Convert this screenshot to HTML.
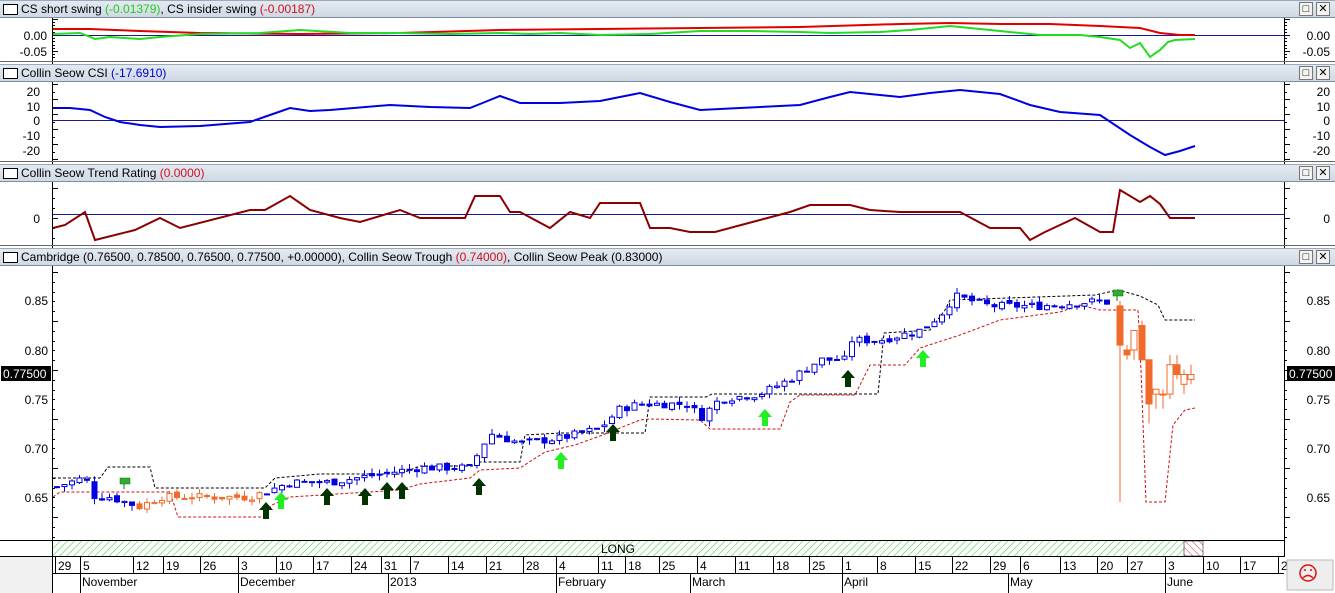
<!DOCTYPE html>
<html><head><meta charset="utf-8">
<style>
body{margin:0;width:1335px;height:593px;overflow:hidden;background:#fff;font-family:"Liberation Sans",sans-serif;position:relative}
.tb{position:absolute;left:0;width:1335px;height:16px;background:linear-gradient(#e4eaf1,#cfd9e4);border-top:1px solid #9aa8b8;border-bottom:1px solid #7f8fa0;font-size:12px;line-height:16px;color:#000}
.tb .ic{position:absolute;left:3px;top:3px;width:13px;height:9px;border:1px solid #000;background:#fff}
.tb .t{position:absolute;left:21px;top:0;white-space:nowrap}
.tb .b{position:absolute;top:1px;width:12px;height:12px;border:1px solid #777;background:#f2f2f2;font-size:11px;line-height:12px;text-align:center}
svg{position:absolute;left:0;top:0}
</style></head><body>
<svg id="s" width="1335" height="593" font-family="Liberation Sans" font-size="12">
<rect x="0" y="557" width="52" height="36" fill="#f0f0f0"/>
<line x1="52.5" y1="18" x2="52.5" y2="593" stroke="#000"/>
<line x1="1284.5" y1="18" x2="1284.5" y2="557" stroke="#000"/>
<g id="tk"></g>
<!-- panel1 -->
<line x1="53" y1="35.5" x2="1284" y2="35.5" stroke="#1a1a8c"/>
<text x="47" y="40" text-anchor="end">0.00</text><text x="47" y="56" text-anchor="end">-0.05</text>
<text x="1330" y="40" text-anchor="end">0.00</text><text x="1330" y="56" text-anchor="end">-0.05</text>
<polyline fill="none" stroke="#e00000" stroke-width="2" points="53,29 90,29 140,31 200,33 300,34 400,33 500,30 600,29 700,28 800,27 900,24 950,23 1000,24 1050,24 1100,26 1140,28 1160,33 1180,35 1195,35"/>
<polyline fill="none" stroke="#22dd22" stroke-width="2" points="53,34 80,33 95,39 110,37 140,39 160,37 200,34 260,33 300,30 350,33 400,33 450,34 500,33 530,34 560,33 600,35 650,34 700,31 750,31 800,32 830,33 880,32 910,30 950,26 990,30 1040,35 1080,35 1100,37 1120,40 1130,48 1140,43 1150,57 1160,50 1168,42 1175,40 1195,39"/>
<line x1="0" y1="61.5" x2="1335" y2="61.5" stroke="#666"/>
<!-- panel2 -->
<line x1="53" y1="120.5" x2="1284" y2="120.5" stroke="#1a1a8c"/>
<g text-anchor="end"><text x="40" y="96">20</text><text x="40" y="111">10</text><text x="40" y="125">0</text><text x="40" y="140">-10</text><text x="40" y="155">-20</text>
<text x="1330" y="96">20</text><text x="1330" y="111">10</text><text x="1330" y="125">0</text><text x="1330" y="140">-10</text><text x="1330" y="155">-20</text></g>
<polyline fill="none" stroke="#0000e0" stroke-width="2" points="53,108 70,108 90,110 105,117 120,122 140,125 160,127 200,126 250,122 270,115 290,108 310,111 330,110 390,105 430,107 470,108 485,102 500,96 520,103 560,103 600,101 620,97 640,93 670,102 700,110 740,108 780,106 800,105 830,97 850,92 900,97 930,93 960,90 1000,94 1030,105 1060,112 1100,115 1115,125 1130,135 1150,147 1165,155 1180,151 1195,146"/>
<line x1="0" y1="161.5" x2="1335" y2="161.5" stroke="#666"/>
<!-- panel3 -->
<line x1="53" y1="214.5" x2="1284" y2="214.5" stroke="#1a1a8c"/>
<text x="40" y="223" text-anchor="end">0</text><text x="1330" y="223" text-anchor="end">0</text>
<polyline fill="none" stroke="#8b0000" stroke-width="2" points="53,228 65,225 85,212 95,240 135,230 160,218 180,228 250,210 265,210 290,196 310,210 340,218 360,222 400,210 420,218 465,218 475,196 500,196 510,212 520,212 550,228 570,212 590,218 600,203 640,203 650,228 670,228 690,232 715,232 790,212 810,205 850,205 870,210 900,212 960,212 990,228 1020,228 1030,240 1045,232 1075,218 1100,232 1113,232 1120,190 1140,202 1150,196 1160,204 1170,218 1195,218"/>
<line x1="0" y1="245.5" x2="1335" y2="245.5" stroke="#666"/>
<!-- panel4 -->
<g text-anchor="end"><text x="48" y="305">0.85</text><text x="48" y="355">0.80</text><text x="48" y="404">0.75</text><text x="48" y="453">0.70</text><text x="48" y="502">0.65</text>
<text x="1330" y="305">0.85</text><text x="1330" y="355">0.80</text><text x="1330" y="404">0.75</text><text x="1330" y="453">0.70</text><text x="1330" y="502">0.65</text></g>
<rect x="1" y="366" width="50" height="15" fill="#000"/><text x="3" y="378" fill="#fff">0.77500</text>
<rect x="1287" y="366" width="48" height="15" fill="#000"/><text x="1289" y="378" fill="#fff">0.77500</text>
<polyline fill="none" stroke="#000" stroke-dasharray="3,2" points="53,478 100,478 108,467 150,467 155,488 265,488 275,478 320,474 400,474 420,466 475,466 480,462 520,462 525,435 560,433 645,433 650,397 706,397 712,394 878,394 884,333 930,330 945,310 950,300 1095,295 1118,290 1140,296 1158,305 1165,320 1195,320"/>
<polyline fill="none" stroke="#d01010" stroke-dasharray="3,2" points="53,497 60,492 170,492 178,517 263,517 272,505 290,497 400,490 420,484 470,478 480,470 520,468 545,452 575,445 600,436 640,420 650,419 700,420 710,429 780,429 790,402 800,395 855,395 870,365 905,365 920,348 960,335 1000,320 1060,312 1080,305 1100,310 1138,310 1141,370 1146,502 1165,502 1173,425 1185,410 1195,408"/>
<g id="c"></g>
<g id="ar"></g>
<rect x="120" y="478" width="10" height="6" fill="#3a3" stroke="#070" stroke-width=".5"/><line x1="124" y1="484" x2="124" y2="489" stroke="#070"/>
<rect x="1113" y="290" width="10" height="6" fill="#3a3" stroke="#070" stroke-width=".5"/><line x1="1117" y1="296" x2="1117" y2="301" stroke="#070"/>
<defs><pattern id="h" width="5" height="5" patternUnits="userSpaceOnUse" patternTransform="rotate(45)"><line x1="0" y1="0" x2="0" y2="5" stroke="#3c3" stroke-width="1"/></pattern>
<pattern id="hr" width="5" height="5" patternUnits="userSpaceOnUse" patternTransform="rotate(-45)"><line x1="0" y1="0" x2="0" y2="5" stroke="#c33" stroke-width="1"/></pattern></defs>
<line x1="0" y1="540.5" x2="1284" y2="540.5" stroke="#000"/>
<rect x="53" y="541" width="1131" height="15" fill="url(#h)"/>
<rect x="1184" y="541" width="19" height="15" fill="url(#hr)" stroke="#000" stroke-width=".5"/>
<text x="618" y="553" text-anchor="middle">LONG</text>
<line x1="0" y1="556.5" x2="1284" y2="556.5" stroke="#000"/>
<line x1="53" y1="573.5" x2="1284" y2="573.5" stroke="#000"/>
<g id="ax"></g>
<rect x="1287" y="560" width="46" height="30" fill="#eee" stroke="#bbb"/>
<circle cx="1308" cy="573" r="8" fill="none" stroke="#e01010" stroke-width="1.5"/><circle cx="1305" cy="570" r="1" fill="#e01010"/><circle cx="1311" cy="570" r="1" fill="#e01010"/><path d="M1303 578 Q1308 573 1313 578" fill="none" stroke="#e01010" stroke-width="1.3"/>
</svg>
<div class="tb" style="top:0"><div class="ic"></div><div class="t">CS short swing <span style="color:#22cc22">(-0.01379)</span>, CS insider swing <span style="color:#d01020">(-0.00187)</span></div><div class="b" style="left:1299px">□</div><div class="b" style="left:1316px">✕</div></div>
<div class="tb" style="top:64px"><div class="ic"></div><div class="t">Collin Seow CSI <span style="color:#0000d0">(-17.6910)</span></div><div class="b" style="left:1299px">□</div><div class="b" style="left:1316px">✕</div></div>
<div class="tb" style="top:164px"><div class="ic"></div><div class="t">Collin Seow Trend Rating <span style="color:#d01020">(0.0000)</span></div><div class="b" style="left:1299px">□</div><div class="b" style="left:1316px">✕</div></div>
<div class="tb" style="top:248px"><div class="ic"></div><div class="t">Cambridge (0.76500, 0.78500, 0.76500, 0.77500, +0.00000), Collin Seow Trough <span style="color:#d01020">(0.74000)</span>, Collin Seow Peak <span style="color:#000">(0.83000)</span></div><div class="b" style="left:1299px">□</div><div class="b" style="left:1316px">✕</div></div>
<script>
var NS="http://www.w3.org/2000/svg";
function el(p,t,a){var e=document.createElementNS(NS,t);for(var k in a)e.setAttribute(k,a[k]);p.appendChild(e);return e;}
var tk=document.getElementById("tk");
function ticks(y0,y1,step,major){for(var y=y0,i=0;y<=y1;y+=step,i++){var L=(i%major==0)?6:3;el(tk,"line",{x1:52,x2:52+L,y1:Math.round(y)+.5,y2:Math.round(y)+.5,stroke:"#000"});el(tk,"line",{x1:1284,x2:1284+L,y1:Math.round(y)+.5,y2:Math.round(y)+.5,stroke:"#000"});}}
ticks(19,59,3.2,5);ticks(84,159,7.5,2);ticks(188,244,10,3);ticks(272,538,9.8,5);
var kp=[[55,.66],[85,.67],[95,.65],[110,.65],[140,.64],[160,.65],[250,.65],[265,.655],[290,.665],[330,.665],[360,.67],[390,.675],[420,.68],[470,.68],[490,.715],[520,.705],[560,.71],[600,.72],[620,.74],[640,.745],[690,.745],[700,.73],[720,.75],[760,.755],[790,.77],[820,.79],[845,.79],[850,.81],[880,.81],[920,.82],[940,.835],[955,.855],[990,.845],[1040,.845],[1100,.85],[1112,.848]];
function f(x){for(var i=1;i<kp.length;i++)if(x<=kp[i][0]){var a=kp[i-1],b=kp[i];return a[1]+(b[1]-a[1])*(x-a[0])/(b[0]-a[0]);}return kp[kp.length-1][1];}
function Y(p){return 301+(0.85-p)*980;}
var g=document.getElementById("c"),seed=7;function r(){seed=(seed*9301+49297)%233280;return seed/233280;}
var prev=f(55);
for(var x=57;x<1112;x+=7.5){var c=f(x)+(r()-.5)*.008,o=prev+(r()-.5)*.004;prev=c;
 var col=(x>135&&x<262)?"#f06a2a":"#0000e0";var hi=Math.max(o,c)+r()*.006,lo=Math.min(o,c)-r()*.006;
 el(g,"line",{x1:x,x2:x,y1:Y(hi),y2:Y(lo),stroke:col});
 var t=Math.min(Y(o),Y(c)),h=Math.max(1,Math.abs(Y(o)-Y(c)));
 el(g,"rect",{x:x-2.5,y:t,width:5,height:h,fill:c<o?col:"#fff",stroke:col});}
var oc=[[1120,.845,.805,.85,.645,1],[1127,.80,.795,.805,.79,1],[1134,.80,.82,.82,.79,0],[1142,.825,.79,.83,.79,1],[1149,.79,.745,.79,.725,1],[1156,.755,.76,.76,.74,0],[1163,.755,.755,.76,.74,0],[1170,.755,.785,.795,.75,0],[1177,.785,.775,.795,.77,1],[1184,.765,.775,.78,.755,0],[1191,.77,.775,.785,.765,0]];
oc.forEach(function(d){var col="#f06a2a";el(g,"line",{x1:d[0],x2:d[0],y1:Y(d[3]),y2:Y(d[4]),stroke:col});var t=Math.min(Y(d[1]),Y(d[2])),h=Math.max(1,Math.abs(Y(d[1])-Y(d[2])));el(g,"rect",{x:d[0]-3,y:t,width:6,height:h,fill:d[5]?col:"#fff",stroke:col});});
var ar=document.getElementById("ar");
[[266,510,"#003300"],[281,500,"#22ee22"],[327,496,"#003300"],[365,496,"#003300"],[387,490,"#003300"],[402,490,"#003300"],[479,486,"#003300"],[561,460,"#22ee22"],[613,432,"#003300"],[765,417,"#22ee22"],[848,378,"#003300"],[923,358,"#22ee22"]].forEach(function(a){var x=a[0],y=a[1];el(ar,"path",{d:"M"+x+" "+(y-8)+"l7 8h-4v9h-6v-9h-4z",fill:a[2]});});
var ax=document.getElementById("ax");
[[55,"29"],[80,"5"],[133,"12"],[163,"19"],[200,"26"],[238,"3"],[276,"10"],[313,"17"],[351,"24"],[381,"31"],[410,"7"],[448,"14"],[486,"21"],[523,"28"],[556,"4"],[598,"11"],[625,"18"],[659,"25"],[697,"4"],[735,"11"],[773,"18"],[809,"25"],[842,"1"],[877,"8"],[915,"15"],[952,"22"],[990,"29"],[1020,"6"],[1060,"13"],[1097,"20"],[1127,"27"],[1165,"3"],[1203,"10"],[1240,"17"],[1278,"2"]].forEach(function(d){el(ax,"line",{x1:d[0]+.5,x2:d[0]+.5,y1:557,y2:573,stroke:"#000"});var t=el(ax,"text",{x:d[0]+3,y:570});t.textContent=d[1];});
[[80,"November"],[238,"December"],[388,"2013"],[556,"February"],[690,"March"],[842,"April"],[1008,"May"],[1165,"June"]].forEach(function(d){el(ax,"line",{x1:d[0]+.5,x2:d[0]+.5,y1:574,y2:593,stroke:"#000"});var t=el(ax,"text",{x:d[0]+2,y:586});t.textContent=d[1];});
</script>
</body></html>
